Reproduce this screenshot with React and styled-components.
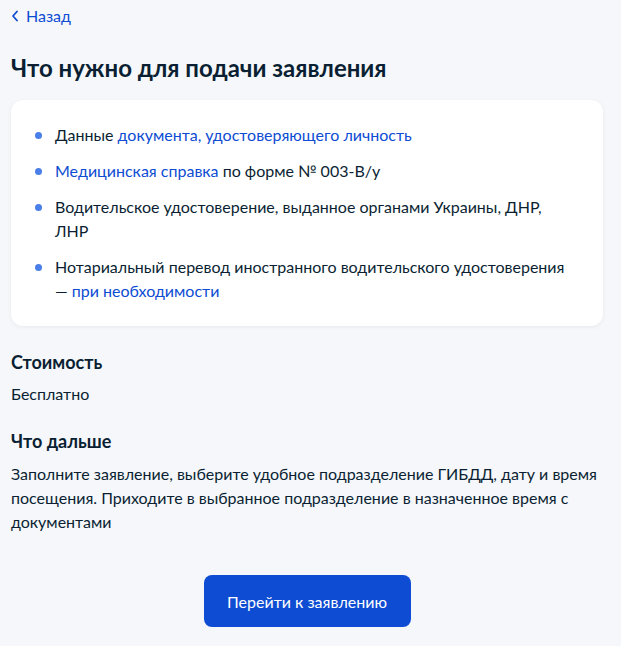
import React from 'react'
import styled, { createGlobalStyle } from 'styled-components'

const GlobalStyle = createGlobalStyle`
  html, body {
    margin: 0;
    padding: 0;
    background: #f5f7fa;
  }
  body {
    font-family: Lato, 'Noto Sans', sans-serif;
    color: #0b1f33;
  }
`

const Page = styled.div`
  padding: 4px 18px 18px 11px;
  display: flex;
  flex-direction: column;
`

const BackLink = styled.a`
  display: flex;
  align-items: center;
  gap: 7px;
  color: #0d4cd3;
  font-size: 16px;
  line-height: 24px;
  text-decoration: none;
  cursor: pointer;
`

const Title = styled.h1`
  margin: 24px 0 16px;
  font-size: 24px;
  line-height: 32px;
  font-weight: 700;
`

const Card = styled.div`
  background: #fff;
  border-radius: 12px;
  box-shadow: 0 1px 4px rgba(11, 31, 51, 0.06);
  padding: 23px 24px;
`

const List = styled.ul`
  list-style: none;
  margin: 0;
  padding: 0;
  max-width: 535px;
  display: flex;
  flex-direction: column;
  gap: 12px;
`

const Item = styled.li`
  position: relative;
  padding-left: 20px;
  font-size: 16px;
  line-height: 24px;

  &::before {
    content: '';
    position: absolute;
    left: 0;
    top: 8.5px;
    width: 7px;
    height: 7px;
    border-radius: 50%;
    background: #4a7ee8;
  }
`

const Link = styled.a`
  color: #0d4cd3;
  text-decoration: none;
  cursor: pointer;
`

const SectionTitle = styled.h2`
  margin: ${({ $first }) => ($first ? '24px' : '23px')} 0 ${({ $first }) => ($first ? '8px' : '9px')};
  font-size: 18px;
  line-height: 24px;
  font-weight: 700;
`

const Text = styled.p`
  margin: 0;
  font-size: 16px;
  line-height: 24px;
`

const ButtonRow = styled.div`
  display: flex;
  justify-content: center;
  margin-top: 41px;
`

const Button = styled.button`
  width: 207px;
  height: 52px;
  border: none;
  border-radius: 8px;
  background: #0d4cd3;
  color: #fff;
  font-family: inherit;
  font-size: 16px;
  cursor: pointer;
`

const Chevron = () => (
  <svg width="8" height="12" viewBox="0 0 8 12">
    <path d="M6 1.5 L2 6 L6 10.5" fill="none" stroke="#0d4cd3" strokeWidth="1.8" strokeLinecap="round" strokeLinejoin="round" />
  </svg>
)

const App = () => (
  <>
    <GlobalStyle />
    <Page>
      <BackLink>
        <Chevron />
        Назад
      </BackLink>
      <Title>Что нужно для подачи заявления</Title>
      <Card>
        <List>
          <Item>
            Данные <Link>документа, удостоверяющего личность</Link>
          </Item>
          <Item>
            <Link>Медицинская справка</Link> по форме № 003-В/у
          </Item>
          <Item>Водительское удостоверение, выданное органами Украины, ДНР, ЛНР</Item>
          <Item>
            Нотариальный перевод иностранного водительского удостоверения — <Link>при необходимости</Link>
          </Item>
        </List>
      </Card>
      <SectionTitle $first>Стоимость</SectionTitle>
      <Text>Бесплатно</Text>
      <SectionTitle>Что дальше</SectionTitle>
      <Text>
        Заполните заявление, выберите удобное подразделение ГИБДД, дату и время посещения. Приходите в
        выбранное подразделение в назначенное время с документами
      </Text>
      <ButtonRow>
        <Button>Перейти к заявлению</Button>
      </ButtonRow>
    </Page>
  </>
)

export default App
